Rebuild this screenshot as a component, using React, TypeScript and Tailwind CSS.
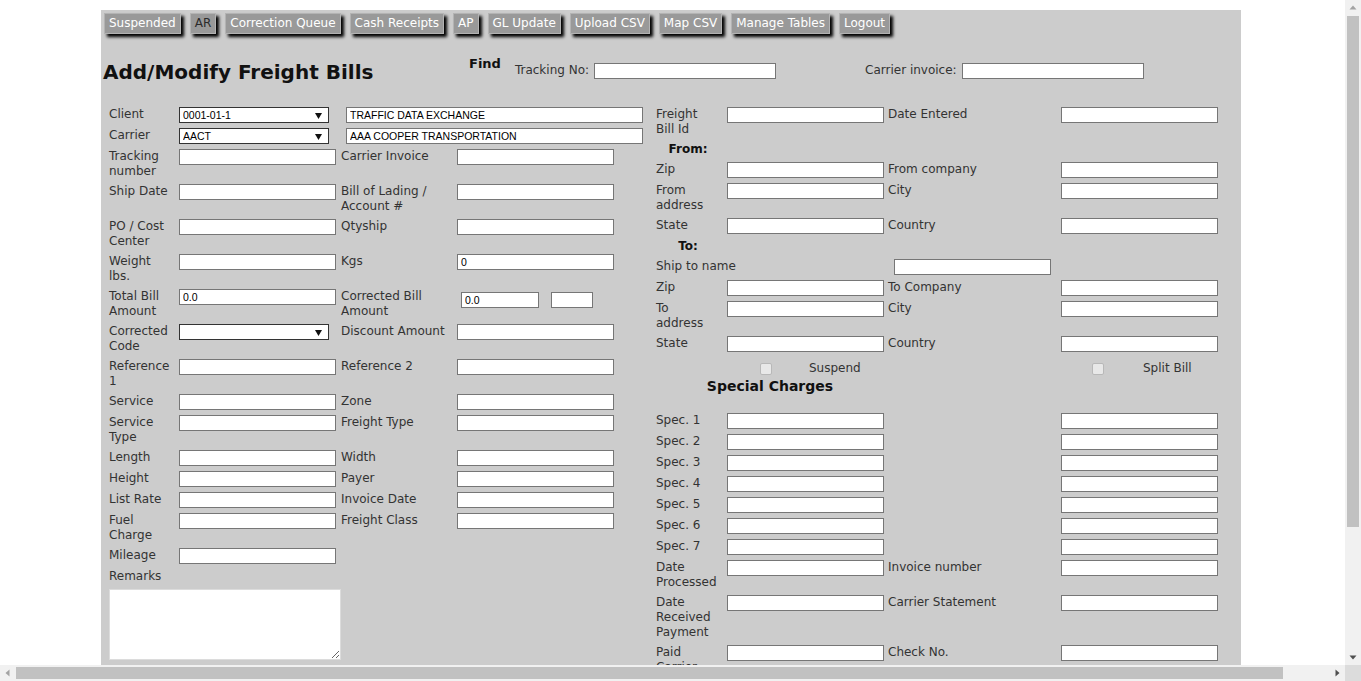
import type { ReactNode } from 'react';

const navItems = ['Suspended', 'AR', 'Correction Queue', 'Cash Receipts', 'AP', 'GL Update', 'Upload CSV', 'Map CSV', 'Manage Tables', 'Logout'];

function Box({ w = 'w-[157px]', value = '', extra = '' }: { w?: string; value?: string; extra?: string }) {
  return (
    <input
      type="text"
      defaultValue={value}
      className={`${w} ${extra} block h-[16px] shrink-0 border border-[#767676] bg-white px-[3px] font-['Liberation_Sans',Arial,sans-serif] text-[10.5px] text-black outline-none`}
    />
  );
}

function DropDown({ value }: { value: string }) {
  return (
    <div className="flex h-[16px] w-[150px] items-center border border-[#333] bg-white pr-[6px]">
      <select className="h-full flex-1 appearance-none bg-transparent pl-[3px] font-['Liberation_Sans',Arial,sans-serif] text-[10.5px] text-black outline-none">
        <option>{value}</option>
      </select>
      <svg width="7" height="7" viewBox="0 0 7 7">
        <path d="M0 1h7L3.5 7z" fill="#111" />
      </svg>
    </div>
  );
}

function Row({ children, pad = 'pt-[3px] pb-[2px]' }: { children: ReactNode; pad?: string }) {
  return <div className={`flex items-start ${pad}`}>{children}</div>;
}

// left table cells
function LRow({ a, av, b, bv }: { a: string; av?: string; b?: string; bv?: string }) {
  return (
    <Row>
      <div className="w-[70px] shrink-0 pl-[2px] pr-[3px] leading-[15px]">{a}</div>
      <div className="w-[162px] shrink-0 pl-[2px]">
        <Box value={av} />
      </div>
      {b !== undefined && (
        <>
          <div className="w-[116px] shrink-0 pl-[2px] pr-[2px] leading-[15px]">{b}</div>
          <div className="pl-[2px]">
            <Box value={bv} />
          </div>
        </>
      )}
    </Row>
  );
}

// right table cells
function RRow({ a, b, blank }: { a: string; b?: string; blank?: boolean }) {
  return (
    <Row>
      <div className="w-[71px] shrink-0 pl-[2px] pr-[6px] leading-[15px]">{a}</div>
      <div className="w-[161px] shrink-0 pl-[2px]">
        <Box />
      </div>
      <div className="w-[173px] shrink-0 pl-[2px] leading-[15px]">{blank ? '' : b}</div>
      <div className="pl-[2px]">
        <Box />
      </div>
    </Row>
  );
}

function Heading({ text }: { text: string }) {
  return (
    <Row>
      <div className="w-[68px] text-center font-bold leading-[15px] text-[#111]">{text}</div>
    </Row>
  );
}

function Check({ label, gap, pre }: { label: string; gap: string; pre: string }) {
  return (
    <div className={`flex items-center leading-[15px] ${pre}`}>
      <input type="checkbox" disabled className="h-[12px] w-[12px] appearance-none rounded-[2px] border border-[#b8b8b8] bg-[#e8e8e8]" />
      <span className={gap}>{label}</span>
    </div>
  );
}

function Tri({ dir, color }: { dir: 'up' | 'down' | 'left' | 'right'; color: string }) {
  const d = {
    up: 'M0.5 5.5h7L4 1.5z',
    down: 'M0.5 2.5h7L4 6.5z',
    left: 'M5.5 0.5v7L1.5 4z',
    right: 'M2.5 0.5v7L6.5 4z',
  }[dir];
  return (
    <svg width="8" height="8" viewBox="0 0 8 8">
      <path d={d} fill={color} />
    </svg>
  );
}

export default function App() {
  return (
    <div className="flex h-[681px] w-full flex-col overflow-hidden bg-white font-['Verdana','DejaVu_Sans',sans-serif] text-[12px] text-[#333]">
      <div className="flex min-h-0 flex-1">
        <div className="min-w-0 flex-1 overflow-hidden pl-[101px] pt-[10px]">
          <div className="h-[900px] w-[1140px] bg-[#cccccc]">
            {/* Nav buttons */}
            <div className="flex gap-[9px] pl-[3px] pt-[3px]">
              {navItems.map((item) => (
                <button
                  key={item}
                  className={`h-[21px] border border-[#b3b3b3] bg-[#999999] px-[4px] text-[12px] leading-[19px] shadow-[3px_3px_3px_#000] ${item === 'AR' ? 'text-[#2b2b2b]' : 'text-white'}`}
                >
                  {item}
                </button>
              ))}
            </div>

            {/* Title + find */}
            <div className="mt-[22px] flex items-start">
              <h1 className="mt-[4px] w-[368px] pl-[2px] text-[20px] font-bold leading-[24px] text-[#111]">Add/Modify Freight Bills</h1>
              <div className="text-[13px] font-bold leading-[16px] text-[#111]">Find</div>
              <div className="ml-[14px] mt-[7px] leading-[15px]">Tracking No:</div>
              <Box w="w-[182px]" extra="ml-[5px] mt-[7px]" />
              <div className="ml-[89px] mt-[7px] leading-[15px]">Carrier invoice:</div>
              <Box w="w-[182px]" extra="ml-[5px] mt-[7px]" />
            </div>

            {/* Form */}
            <div className="mt-[20px] flex items-start">
              <div className="ml-[6px] w-[547px] shrink-0">
                <Row>
                  <div className="w-[70px] shrink-0 pl-[2px] leading-[15px]">Client</div>
                  <div className="w-[162px] shrink-0 pl-[2px]">
                    <DropDown value="0001-01-1" />
                  </div>
                  <div className="pl-[7px]">
                    <Box w="w-[297px]" value="TRAFFIC DATA EXCHANGE" />
                  </div>
                </Row>
                <Row>
                  <div className="w-[70px] shrink-0 pl-[2px] leading-[15px]">Carrier</div>
                  <div className="w-[162px] shrink-0 pl-[2px]">
                    <DropDown value="AACT" />
                  </div>
                  <div className="pl-[7px]">
                    <Box w="w-[297px]" value="AAA COOPER TRANSPORTATION" />
                  </div>
                </Row>
                <LRow a="Tracking number" b="Carrier Invoice" />
                <LRow a="Ship Date" b="Bill of Lading / Account #" />
                <LRow a="PO / Cost Center" b="Qtyship" />
                <LRow a="Weight lbs." b="Kgs" bv="0" />
                <Row>
                  <div className="w-[70px] shrink-0 pl-[2px] pr-[3px] leading-[15px]">Total Bill Amount</div>
                  <div className="w-[162px] shrink-0 pl-[2px]">
                    <Box value="0.0" />
                  </div>
                  <div className="w-[116px] shrink-0 pl-[2px] pr-[2px] leading-[15px]">Corrected Bill Amount</div>
                  <div className="flex gap-[12px] pl-[6px] pt-[3px]">
                    <Box w="w-[78px]" value="0.0" />
                    <Box w="w-[42px]" />
                  </div>
                </Row>
                <Row>
                  <div className="w-[70px] shrink-0 pl-[2px] pr-[3px] leading-[15px]">Corrected Code</div>
                  <div className="w-[162px] shrink-0 pl-[2px]">
                    <DropDown value="" />
                  </div>
                  <div className="w-[116px] shrink-0 pl-[2px] pr-[2px] leading-[15px]">Discount Amount</div>
                  <div className="pl-[2px]">
                    <Box />
                  </div>
                </Row>
                <LRow a="Reference 1" b="Reference 2" />
                <LRow a="Service" b="Zone" />
                <LRow a="Service Type" b="Freight Type" />
                <LRow a="Length" b="Width" />
                <LRow a="Height" b="Payer" />
                <LRow a="List Rate" b="Invoice Date" />
                <LRow a="Fuel Charge" b="Freight Class" />
                <LRow a="Mileage" />
                <div className="pl-[2px] pt-[3px] pb-[3px] leading-[15px]">Remarks</div>
                <textarea className="ml-[2px] mt-[2px] block h-[71px] w-[232px] resize-y border border-[#dcdcdc] bg-white outline-none" />
              </div>

              <div className="shrink-0">
                <RRow a="Freight Bill Id" b="Date Entered" />
                <Heading text="From:" />
                <RRow a="Zip" b="From company" />
                <RRow a="From address" b="City" />
                <RRow a="State" b="Country" />
                <Heading text="To:" />
                <Row>
                  <div className="w-[232px] shrink-0 pl-[2px] leading-[15px]">Ship to name</div>
                  <div className="pl-[8px]">
                    <Box />
                  </div>
                </Row>
                <RRow a="Zip" b="To Company" />
                <RRow a="To address" b="City" />
                <RRow a="State" b="Country" />
                <Row pad="pt-[7px] pb-[2px]">
                  <div className="w-[71px] shrink-0" />
                  <div className="w-[161px] shrink-0">
                    <Check label="Suspend" pre="ml-[35px]" gap="ml-[37px]" />
                  </div>
                  <div className="w-[173px] shrink-0" />
                  <Check label="Split Bill" pre="ml-[33px]" gap="ml-[39px]" />
                </Row>
                <div className="w-[232px] pb-[15px] text-center text-[14px] font-bold leading-[17px] text-[#111]">Special Charges</div>
                {[1, 2, 3, 4, 5, 6, 7].map((n) => (
                  <RRow key={n} a={`Spec. ${n}`} blank />
                ))}
                <RRow a="Date Processed" b="Invoice number" />
                <RRow a="Date Received Payment" b="Carrier Statement" />
                <RRow a="Paid Carrier" b="Check No." />
              </div>
            </div>
          </div>
        </div>

        {/* vertical scrollbar */}
        <div className="flex w-[16px] shrink-0 flex-col bg-[#f1f1f1]">
          <div className="flex h-[16px] items-center justify-center">
            <Tri dir="up" color="#a3a3a3" />
          </div>
          <div className="mx-[2px] h-[511px] bg-[#c1c1c1]" />
          <div className="flex-1" />
          <div className="flex h-[16px] items-center justify-center">
            <Tri dir="down" color="#505050" />
          </div>
        </div>
      </div>

      {/* horizontal scrollbar */}
      <div className="flex h-[16px] shrink-0 bg-[#f1f1f1]">
        <div className="flex w-[16px] items-center justify-center">
          <Tri dir="left" color="#a3a3a3" />
        </div>
        <div className="my-[2px] w-[1267px] bg-[#c1c1c1]" />
        <div className="flex-1" />
        <div className="flex w-[16px] items-center justify-center">
          <Tri dir="right" color="#505050" />
        </div>
        <div className="w-[16px] bg-[#dcdcdc]" />
      </div>
    </div>
  );
}
